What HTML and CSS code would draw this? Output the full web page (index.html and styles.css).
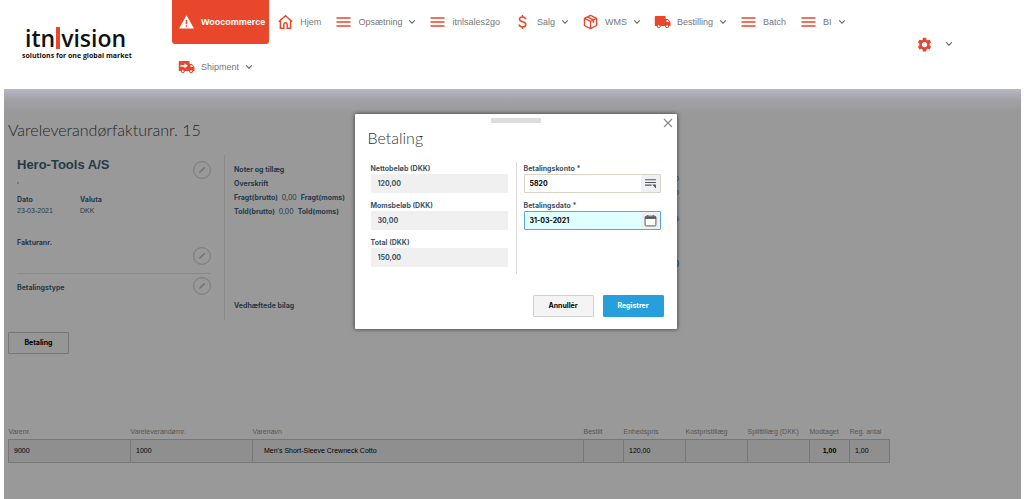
FILE: index.html
```
<!DOCTYPE html>
<html lang="da">
<head>
<meta charset="utf-8">
<title>Vareleverandørfakturanr. 15</title>
<link rel="stylesheet" href="styles.css">
</head>
<body>
<svg class="defs" aria-hidden="true">
  <symbol id="bars" viewBox="0 0 14 10"><path d="M0 1h14M0 5h14M0 9h14" fill="none" stroke="currentColor" stroke-width="1.3"/></symbol>
  <symbol id="chev" viewBox="0 0 8 6"><path d="M1.2 1.3 4 4.2 6.8 1.3" fill="none" stroke="currentColor" stroke-width="1.1"/></symbol>
  <symbol id="pencil" viewBox="0 0 18 18"><circle cx="9" cy="9" r="8.4" fill="none" stroke="currentColor" stroke-width=".9"/><path d="m6 12 .5-1.8 4.6-4.5 1.2 1.2-4.600 4.500z" fill="currentColor"/></symbol>
</svg>
<header class="top">
  <a class="logo" href="#">
    <span class="logo-name">itn<i class="logo-bar"></i>vision</span>
    <span class="logo-tag">solutions for one global market</span>
  </a>
  <nav class="nav">
    <a class="item active" href="#"><svg class="icon" viewBox="0 0 17 16"><path d="M8.500 1.300 16 14.500H1z" fill="currentColor"/><path d="M8.500 6v4.300M8.500 11.200v1.600" stroke="#e9472c" stroke-width="1.500"/></svg>Woocommerce</a>
    <a class="item" href="#"><svg class="icon" viewBox="0 0 17 16"><path d="M1.800 7.800 8.500 1.800 15.200 7.800M3.400 6.800v7.400h3.400v-3.700a1.700 1.700 0 0 1 3.400 0v3.700h3.400V6.800" fill="none" stroke="currentColor" stroke-width="1.500"/></svg>Hjem</a>
    <a class="item" href="#"><svg class="icon bars"><use href="#bars"/></svg>Opsætning<svg class="chev"><use href="#chev"/></svg></a>
    <a class="item" href="#"><svg class="icon bars"><use href="#bars"/></svg>itnlsales2go</a>
    <a class="item" href="#"><svg class="icon" viewBox="0 0 17 16"><path d="M11.700 5.200C11.300 3.800 10.100 3.100 8.500 3.100 6.700 3.100 5.500 4 5.500 5.300c0 3.300 6.300 1.700 6.300 5.100 0 1.500-1.300 2.500-3.300 2.500-1.900 0-3.100-.8-3.500-2.400M8.500 1v2.500M8.500 12.500V15" fill="none" stroke="currentColor" stroke-width="1.500"/></svg>Salg<svg class="chev"><use href="#chev"/></svg></a>
    <a class="item" href="#"><svg class="icon" viewBox="0 0 17 16"><path d="M8.500 1.400 14.600 4.300v7.200L8.500 14.700 2.400 11.500V4.300zM2.400 4.300l6.100 3 6.100-3M8.500 7.300v7.400M5.300 2.900l6.200 3v3" fill="none" stroke="currentColor" stroke-width="1.300" stroke-linejoin="round"/></svg>WMS<svg class="chev"><use href="#chev"/></svg></a>
    <a class="item" href="#"><svg class="icon" viewBox="0 0 17 16"><path d="M1.500 2h9.500q.6 0 .6.600V5h2.400l2.500 3.200V12h-1.200a2.200 2.200 0 0 1-4.300 0H6.900a2.200 2.200 0 0 1-4.300 0H.8V2.700Q.8 2 1.500 2z" fill="currentColor"/><path d="M12.500 6h1.300l1.500 2h-2.800z" fill="#fff"/><circle cx="4.800" cy="12.200" r="1.500" fill="#fff" stroke="currentColor"/><circle cx="13.100" cy="12.200" r="1.500" fill="#fff" stroke="currentColor"/></svg>Bestilling<svg class="chev"><use href="#chev"/></svg></a>
    <a class="item" href="#"><svg class="icon bars"><use href="#bars"/></svg>Batch</a>
    <a class="item" href="#"><svg class="icon bars"><use href="#bars"/></svg>BI<svg class="chev"><use href="#chev"/></svg></a>
    <a class="item" href="#"><svg class="icon" viewBox="0 0 17 16"><path d="M1.500 2h9.500q.6 0 .6.600V5h2.400l2.500 3.200V12h-1.200a2.200 2.200 0 0 1-4.300 0H6.900a2.200 2.200 0 0 1-4.300 0H.8V2.700Q.8 2 1.500 2z" fill="currentColor"/><path d="M12.500 6h1.300l1.500 2h-2.800zM2.500 5.900h4V4.300l3.400 2.500-3.400 2.500V7.700h-4z" fill="#fff"/><circle cx="4.800" cy="12.200" r="1.500" fill="#fff" stroke="currentColor"/><circle cx="13.100" cy="12.200" r="1.500" fill="#fff" stroke="currentColor"/></svg>Shipment<svg class="chev"><use href="#chev"/></svg></a>
  </nav>
  <button class="settings" type="button" aria-label="Indstillinger">
    <svg class="gear" viewBox="0 0 24 24"><path fill="currentColor" fill-rule="evenodd" d="M9.500 1h5l.6 3.200 1.900 1.100 3.100-1.100 2.500 4.300-2.500 2.200v2.600l2.500 2.200-2.500 4.300-3.100-1.100-1.900 1.100-.6 3.200h-5l-.6-3.200L7 18.700l-3.100 1.100-2.500-4.300 2.500-2.200v-2.600L1.400 8.500l2.500-4.300L7 5.300l1.900-1.100zM12 7.800a4.200 4.200 0 1 0 0 8.400 4.200 4.200 0 0 0 0-8.400z"/></svg>
    <svg class="chev"><use href="#chev"/></svg>
  </button>
</header>
<main class="page">
  <h1 class="title">Vareleverandørfakturanr. 15</h1>
  <div class="details">
    <section class="supplier">
      <div class="block first">
        <div>
          <h2 class="name">Hero-Tools A/S</h2>
          <p class="address">,</p>
          <dl class="facts">
            <div><dt>Dato</dt><dd>23-03-2021</dd></div>
            <div><dt>Valuta</dt><dd>DKK</dd></div>
          </dl>
        </div>
        <button class="edit" type="button" aria-label="Rediger leverandør"><svg><use href="#pencil"/></svg></button>
      </div>
      <div class="block invoice">
        <b>Fakturanr.</b>
        <button class="edit low" type="button" aria-label="Rediger fakturanr."><svg><use href="#pencil"/></svg></button>
      </div>
      <div class="block pay">
        <b>Betalingstype</b>
        <button class="edit" type="button" aria-label="Rediger betalingstype"><svg><use href="#pencil"/></svg></button>
      </div>
    </section>
    <section class="notes">
      <p><b>Noter og tillæg</b></p>
      <p><b>Overskrift</b></p>
      <p><b>Fragt(brutto)</b><span>0,00</span><b>Fragt(moms)</b></p>
      <p><b>Told(brutto)</b><span>0,00</span><b>Told(moms)</b></p>
      <p class="files"><b>Vedhæftede bilag</b></p>
    </section>
    <section class="totals">
      <p>120,00</p>
      <p>0,00</p>
      <p class="vat">25</p>
      <p class="sum">(DKK)</p>
    </section>
  </div>
  <button class="btn" type="button">Betaling</button>
  <table class="lines">
    <colgroup><col class="c-no"><col class="c-no"><col class="c-name"><col class="c-s"><col class="c-m"><col class="c-m"><col class="c-m"><col class="c-s"><col class="c-s"></colgroup>
    <thead><tr><th>Varenr.</th><th>Vareleverandørnr.</th><th>Varenavn</th><th>Bestilt</th><th>Enhedspris</th><th>Kostpristillæg</th><th>Splittillæg (DKK)</th><th>Modtaget</th><th>Reg. antal</th></tr></thead>
    <tbody><tr><td>9000</td><td>1000</td><td class="wide">Men's Short-Sleeve Crewneck Cotto</td><td></td><td>120,00</td><td></td><td></td><td class="got">1,00</td><td>1,00</td></tr></tbody>
  </table>
  <div class="overlay">
    <form class="dialog" role="dialog" aria-labelledby="dlg-title">
      <div class="grip"></div>
      <button class="close" type="button" aria-label="Luk"><svg viewBox="0 0 10 10"><path d="m1 1 8 8M9 1 1 9" stroke="currentColor" stroke-width="1.100"/></svg></button>
      <h2 class="dlg-title" id="dlg-title">Betaling</h2>
      <div class="cols">
        <div class="col">
          <label for="net">Nettobeløb (DKK)</label><input id="net" class="ro" value="120,00" readonly>
          <label for="vat">Momsbeløb (DKK)</label><input id="vat" class="ro" value="30,00" readonly>
          <label for="total">Total (DKK)</label><input id="total" class="ro" value="150,00" readonly>
        </div>
        <div class="col right">
          <label for="acct">Betalingskonto *</label>
          <div class="field"><input id="acct" value="5820"><button type="button" aria-label="Vælg konto"><svg viewBox="0 0 12 12"><path d="M1 2.500h10M1 5h10M1 7.500h6" stroke="currentColor"/><path d="M7.500 7h3.500v3.500z" fill="currentColor"/></svg></button></div>
          <label for="date">Betalingsdato *</label>
          <div class="field focus"><input id="date" value="31-03-2021"><button type="button" aria-label="Vælg dato"><svg viewBox="0 0 12 12"><rect x="1" y="2" width="10" height="9" rx="1" fill="#fff" stroke="currentColor" stroke-width=".9"/><path d="M1 3.500h10" stroke="currentColor" stroke-width="2"/><path d="M3.500 1v2M8.500 1v2" stroke="currentColor"/></svg></button></div>
        </div>
      </div>
      <div class="actions"><button class="btn light" type="button">Annullér</button><button class="btn primary" type="submit">Registrer</button></div>
    </form>
  </div>
</main>
</body>
</html>
```
FILE: styles.css
```
* { box-sizing: border-box; }
body { margin: 0; padding: 0 3px 0 4px; min-height: 100vh; display: flex; flex-direction: column; background: #fff; font: 7px/12px Inter, "Liberation Sans", sans-serif; color: #26394a; }
h1, h2, p, dl, dd { margin: 0; }
button, input { font: inherit; color: inherit; margin: 0; }
a { color: inherit; text-decoration: none; }
.defs { position: absolute; width: 0; height: 0; }

.top { display: flex; min-height: 89px; align-items: flex-start; }
.logo { width: 168px; padding: 25px 0 0 18px; color: #111; display: flex; flex-direction: column; }
.logo-name { display: flex; align-items: center; padding-left: 3px; font: 600 23px/26px "Open Sans", sans-serif; }
.logo-bar { width: 4px; height: 22px; margin: 0 1px; background: #e9472c; }
.logo-tag { font: 700 7px/10px "Open Sans", sans-serif; white-space: nowrap; }
.nav { flex: 1; display: flex; flex-wrap: wrap; gap: 1px 2px; font: 9px/12px "Liberation Sans", sans-serif; color: #777; }
.item { display: flex; align-items: center; gap: 6px; height: 44px; padding: 0 6px; }
.item.active { background: #e9472c; color: #fff; font-weight: 700; border-radius: 0 0 3px 3px; padding-right: 4px; }
.icon { width: 17px; height: 16px; color: #e9472c; }
.active .icon { color: #fff; }
.bars { height: 10px; }
.chev { width: 8px; height: 6px; color: #666; }
.item .chev { margin-right: -1px; }
.settings { width: 123px; height: 88px; padding: 0 0 0 19px; border: 0; background: none; display: flex; align-items: center; gap: 13px; }
.gear { width: 15px; height: 15px; color: #e9472c; }

.page { position: relative; flex: 1; padding: 29px 4px 34px; background: linear-gradient(#b7b7c8, #a3a3a8 10px, #999 24px); }
.title { color: #262626; font: 300 16px/24px Lato, sans-serif; }
.details { display: flex; margin-top: 13px; height: 165px; }
.supplier { width: 217px; padding-left: 9px; border-right: 1px solid #8a8a8a; }
.block { display: flex; justify-content: space-between; width: 194px; }
.first { height: 82px; }
.name { font: 700 13px/20px "Liberation Sans", sans-serif; }
.address { height: 19px; }
.facts { display: flex; line-height: 11px; }
.facts div { width: 63px; }
dt { font-weight: 700; }
dd { font-family: "Liberation Sans", sans-serif; }
.edit { width: 18px; height: 18px; margin-top: 6px; padding: 0; border: 0; background: none; color: #777; }
.edit svg { display: block; width: 18px; height: 18px; }
.invoice { height: 36px; }
.edit.low { margin-top: 10px; }
.pay { padding-top: 8px; border-top: 1px solid #8a8a8a; }
.pay .edit { margin-top: -5px; }
.notes { width: 160px; padding: 9px 0 0 9px; }
.notes p { display: flex; gap: 4px; height: 14px; }
.notes p.files { margin-top: 80px; }
.totals { width: 294px; padding-top: 18px; text-align: right; font-family: "Liberation Sans", sans-serif; }
.totals p { height: 14px; }
.totals .vat { margin-top: 12px; }
.totals .sum { margin-top: 30px; font-weight: 700; }
.btn { min-width: 61px; height: 22px; padding: 0 12px; border: 1px solid #777; border-radius: 1px; background: #969696; color: #000; font-weight: 700; }
.page > .btn { display: block; margin-top: 12px; }

.lines { width: calc(100% - 127px); margin-top: 71px; border-collapse: collapse; table-layout: fixed; font-family: "Liberation Sans", sans-serif; }
.c-no { width: 122px; }
.c-s { width: 40px; }
.c-m { width: 62px; }
th { height: 14px; padding: 1px 0; text-align: left; font-weight: 400; color: #555; white-space: nowrap; }
td { height: 23px; padding: 0 5px; border: 1px solid #777; background: #8f8f8f; color: #000; }
td.wide { padding-left: 11px; }
td.got { font-weight: 700; text-align: center; }

.overlay { position: absolute; inset: 0; display: flex; justify-content: center; align-items: flex-start; padding: 25px 0 0 6px; }
.dialog { position: relative; width: 322px; padding: 4px 13px 12px; background: #fff; border-radius: 1px; box-shadow: 0 0 4px #333; color: #3c5468; }
.grip { width: 50px; height: 5px; margin: 0 auto; background: #ddd; }
.close { position: absolute; top: 4px; right: 4px; width: 10px; height: 10px; padding: 0; border: 0; background: none; color: #888; display: flex; }
.dlg-title { margin-top: 3px; color: #333; font: 300 16px/24px Lato, sans-serif; }
.cols { display: grid; grid-template-columns: repeat(2, minmax(0, 1fr)); margin-top: 12px; }
.col { display: flex; flex-direction: column; height: 112px; padding: 0 8px 0 3px; font-weight: 700; }
.col.right { padding: 0 3px 0 7px; border-left: 1px solid #ddd; }
label { height: 12px; line-height: 13px; }
.ro, .field { width: 100%; height: 19px; margin-bottom: 6px; border-radius: 1px; }
.ro { padding: 0 7px; border: 0; background: #f0f0f0; }
.field { display: flex; border: 1px solid #d8d4c4; background: #fff; color: #000; }
.field input { flex: 1; min-width: 0; padding: 0 5px; border: 0; background: none; outline: none; font-weight: 700; }
.field button { width: 19px; padding: 2px 3px; border: 0; background: #eef1f4; color: #555; display: flex; align-items: center; }
.field.focus { border-color: #5ba3dc; background: #e0ffff; }
.actions { display: flex; justify-content: flex-end; gap: 9px; margin-top: 21px; }
.light { border-color: #d0d0d0; background: #f4f4f4; }
.primary { border-color: #269fdc; background: #269fdc; color: #fff; }
```
